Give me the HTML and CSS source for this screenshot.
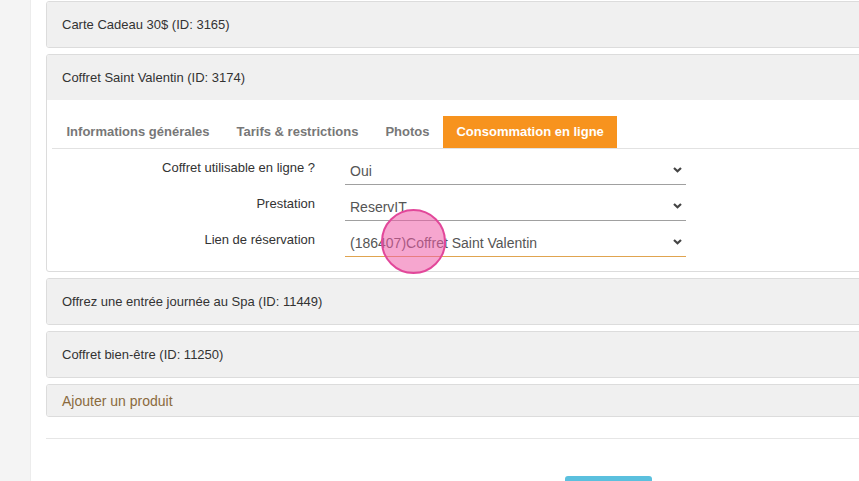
FILE: index.html
```html
<!DOCTYPE html>
<html lang="fr">
<head>
    <meta charset="UTF-8">
    <meta name="viewport" content="width=device-width, initial-scale=1.0">
    <title>Produits - Coffrets cadeaux</title>
    <link rel="stylesheet" href="styles.css">
</head>
<body>
    <div class="layout">
        <aside class="sidebar"></aside>

        <main class="content">
            <div class="panel">
                <div class="panel-heading">Carte Cadeau 30$ (ID: 3165)</div>
            </div>

            <div class="panel">
                <div class="panel-heading">Coffret Saint Valentin (ID: 3174)</div>
                <div class="panel-body">
                    <ul class="tabs">
                        <li><a href="#">Informations générales</a></li>
                        <li><a href="#">Tarifs &amp; restrictions</a></li>
                        <li><a href="#">Photos</a></li>
                        <li class="active"><a href="#">Consommation en ligne</a></li>
                    </ul>

                    <form class="form-online">
                        <div class="form-row">
                            <label for="online_usable">Coffret utilisable en ligne ?</label>
                            <select id="online_usable" name="online_usable">
                                <option>Oui</option>
                                <option>Non</option>
                            </select>
                        </div>
                        <div class="form-row">
                            <label for="service">Prestation</label>
                            <select id="service" name="service">
                                <option>ReservIT</option>
                            </select>
                        </div>
                        <div class="form-row">
                            <label for="booking_link">Lien de réservation</label>
                            <select id="booking_link" name="booking_link" class="focused">
                                <option>(186407)Coffret Saint Valentin</option>
                            </select>
                        </div>
                    </form>
                </div>
            </div>

            <div class="panel">
                <div class="panel-heading">Offrez une entrée journée au Spa (ID: 11449)</div>
            </div>

            <div class="panel">
                <div class="panel-heading">Coffret bien-être (ID: 11250)</div>
            </div>

            <div class="panel panel-add">
                <div class="panel-heading">Ajouter un produit</div>
            </div>

            <hr class="separator">

            <div class="actions">
                <button type="submit" class="btn-save">Enregistrer</button>
            </div>
        </main>
    </div>

    <!-- click marker -->
    <span class="click-dot"></span>
</body>
</html>
```

FILE: styles.css
```css
html, body {
    margin: 0;
    height: 100%;
    overflow: hidden;
}
body {
    font-family: "Liberation Sans", Arial, sans-serif;
    font-size: 13px;
    color: #333;
    background: #fff;
}
.layout {
    display: flex;
    min-height: 100%;
}
.sidebar {
    width: 30px;
    flex-shrink: 0;
    background-color: #f4f4f4;
    border-right: 1px solid #ececec;
}
.content {
    flex-shrink: 0;
    width: 900px;
    padding: 1px 0 0 15px;
}
.panel {
    border: 1px solid #dcdcdc;
    border-radius: 3px;
    margin-bottom: 6px;
    background-color: #fff;
    overflow: hidden;
}
.panel-heading {
    background-color: #f0f0f0;
    padding: 15px 15px 14px;
    line-height: 16px;
}
.panel-body {
    padding: 16px 5px 14px;
}
.tabs {
    display: flex;
    list-style: none;
    margin: 0;
    padding: 0 0 0 1px;
    border-bottom: 1px solid #e2e2e2;
}
.tabs a {
    display: block;
    padding: 8px 13.5px;
    line-height: 16px;
    font-weight: bold;
    color: #777;
    text-decoration: none;
}
.tabs .active a {
    background-color: #f7931e;
    color: #fff;
}
.form-online {
    padding-top: 6px;
}
.form-row {
    display: grid;
    grid-template-columns: 263px 341px;
    column-gap: 30px;
    margin-bottom: 6px;
}
.form-row:last-child {
    margin-bottom: 0;
}
.form-row label {
    text-align: right;
    padding-top: 5px;
    line-height: 16px;
}
.form-row select {
    appearance: none;
    -webkit-appearance: none;
    height: 30px;
    padding: 2px 20px 0 5px;
    border: none;
    border-bottom: 1px solid #a0a0a0;
    border-radius: 0;
    background: #fff url("data:image/svg+xml,%3Csvg xmlns='http://www.w3.org/2000/svg' width='9' height='6' viewBox='0 0 9 6'%3E%3Cpath d='M1 1l3.5 3.2L8 1' fill='none' stroke='%23444' stroke-width='2.2'/%3E%3C/svg%3E") no-repeat right 4px center;
    font-family: inherit;
    font-size: 14px;
    color: #555;
}
.form-row select.focused {
    border-bottom-color: #e0a450;
}
.panel-add .panel-heading {
    padding: 8px 15px 7px;
    font-size: 14px;
    color: #8a6a3d;
}
.separator {
    border: none;
    border-top: 1px solid #e6e6e6;
    margin: 21px 0 0;
}
.actions {
    padding: 37px 0 0 519px;
}
.btn-save {
    width: 87px;
    height: 34px;
    padding: 14px 0 0;
    border: none;
    border-radius: 3px;
    background-color: #5bc0de;
    color: #fff;
    font-family: inherit;
    font-size: 13px;
}
.click-dot {
    position: absolute;
    left: 381px;
    top: 209px;
    width: 61px;
    height: 61px;
    border: 2px solid #e2479a;
    border-radius: 50%;
    background-color: rgba(238, 92, 168, 0.55);
}
```
